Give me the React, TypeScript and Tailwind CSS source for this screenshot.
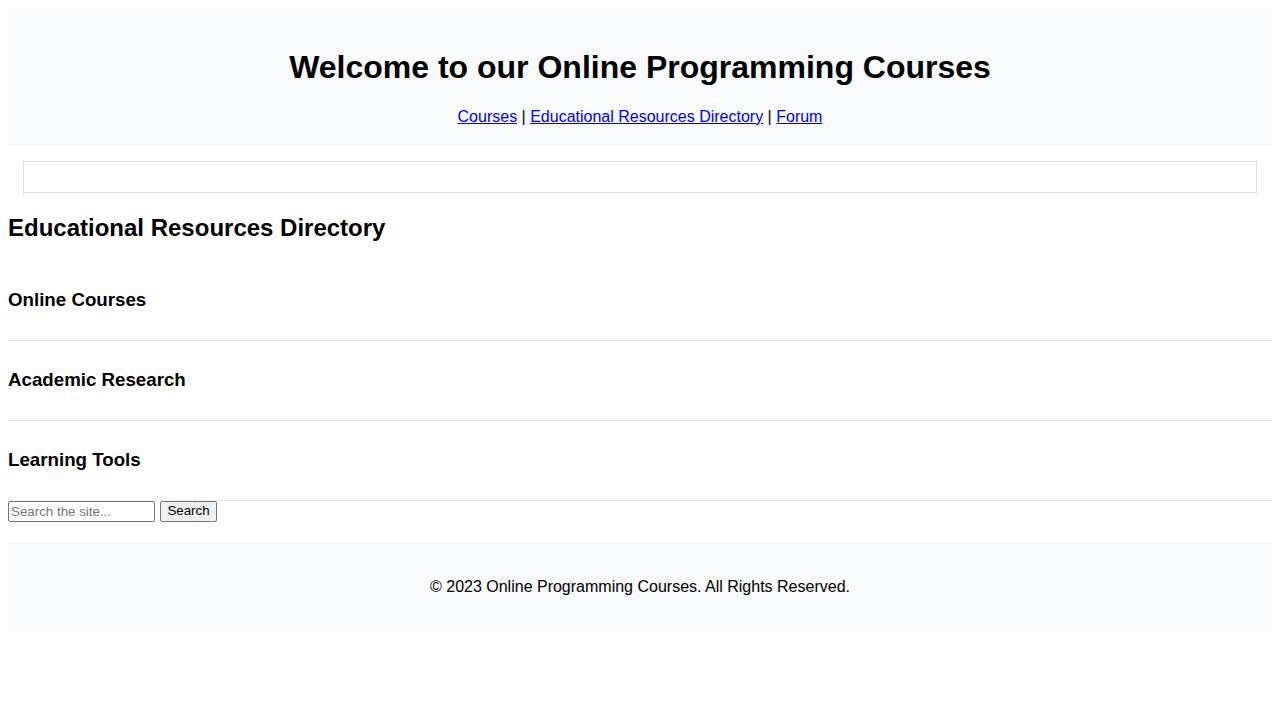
import React from "react";

const items = ["Online Courses", "Academic Research", "Learning Tools"];

export default function App() {
  return (
    <div className="flex flex-col p-2 font-['Liberation_Sans',Arial,sans-serif] text-black bg-white min-h-[720px]">
      <header className="bg-[#f8f9fa] p-5 text-center">
        <h1 className="my-[21.44px] text-[32px] leading-[1.15] font-bold">
          Welcome to our Online Programming Courses
        </h1>
        <nav className="text-[16px] leading-[1.15]">
          <a href="#" className="text-[#0000ee] underline">Courses</a>
          {" | "}
          <a href="#" className="text-[#0000ee] underline">Educational Resources Directory</a>
          {" | "}
          <a href="#" className="text-[#0000ee] underline">Forum</a>
        </nav>
      </header>

      <div className="mt-[15px] mx-[15px] h-8 border border-[#dddddd] p-[15px]" />

      <h2 className="mt-[21px] mb-[19px] text-[24px] leading-[1.15] font-bold">
        Educational Resources Directory
      </h2>

      {items.map((t) => (
        <div key={t} className="py-[10px] border-b border-[#eeeeee]">
          <h3 className="my-[18.72px] text-[18.72px] leading-[1.15] font-bold">{t}</h3>
        </div>
      ))}

      <form className="flex items-center gap-[5px] h-[21px]" onSubmit={(e) => e.preventDefault()}>
        <input
          type="text"
          placeholder="Search the site..."
          className="w-[147px] h-[21px] border border-[#767676] rounded-[2px] px-[2px] text-[13.33px] leading-[1.15] placeholder:text-[#757575] bg-white outline-none"
        />
        <button
          type="submit"
          className="w-[57px] h-[21px] border border-[#767676] rounded-[2px] bg-[#efefef] text-[13.33px] leading-[1.15] text-black"
        >
          Search
        </button>
      </form>

      <footer className="mt-[20px] bg-[#f8f9fa] p-5 text-center">
        <p className="my-4 text-[16px] leading-[1.15]">
          © 2023 Online Programming Courses. All Rights Reserved.
        </p>
      </footer>
    </div>
  );
}
